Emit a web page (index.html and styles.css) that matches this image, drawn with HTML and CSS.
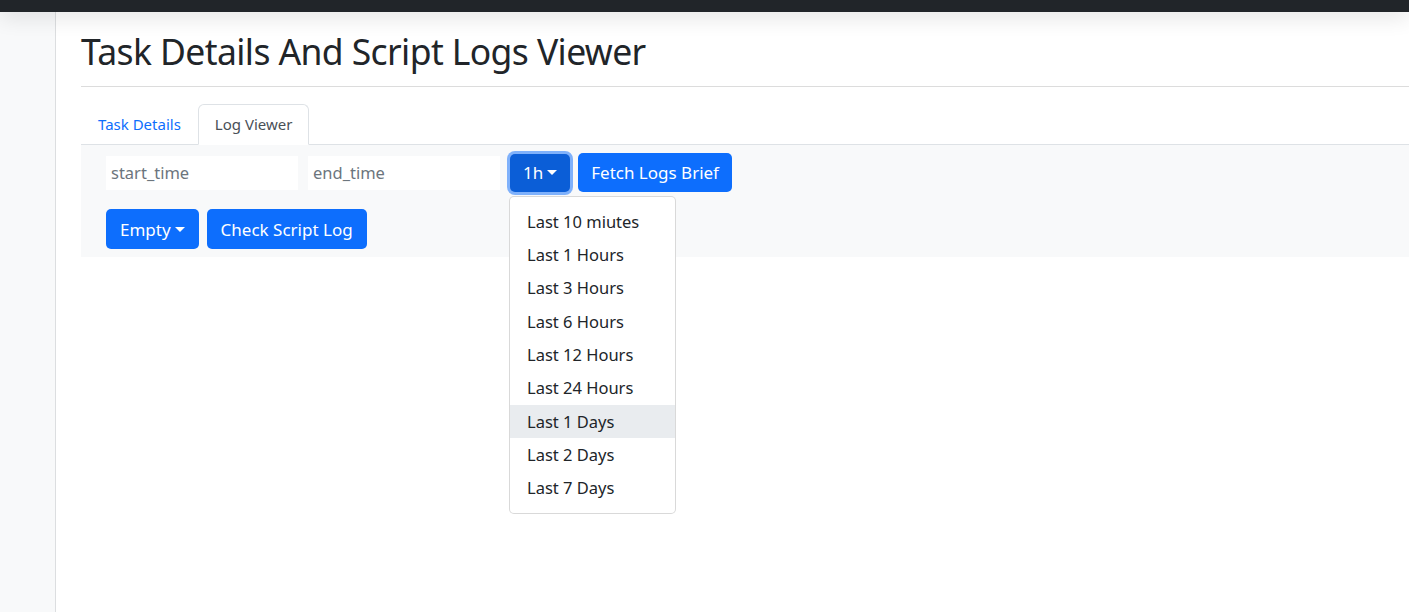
FILE: index.html
```html
<!DOCTYPE html>
<html lang="en">
<head>
<meta charset="utf-8">
<title>Task Details And Script Logs Viewer</title>
<link rel="stylesheet" href="styles.css">
</head>
<body>
<header class="topbar"></header>
<div class="layout">
  <aside class="sidebar"></aside>
  <main class="main">
    <h1 class="title">Task Details And Script Logs Viewer</h1>
    <hr class="rule">
    <ul class="tabs">
      <li><a class="tab">Task Details</a></li>
      <li><a class="tab active">Log Viewer</a></li>
    </ul>
    <section class="panel">
      <div class="row">
        <input class="field" placeholder="start_time">
        <input class="field" placeholder="end_time">
        <div class="dropdown">
          <button class="btn btn-focus">1h<span class="caret"></span></button>
          <ul class="menu">
            <li class="item">Last 10 miutes</li>
            <li class="item">Last 1 Hours</li>
            <li class="item">Last 3 Hours</li>
            <li class="item">Last 6 Hours</li>
            <li class="item">Last 12 Hours</li>
            <li class="item">Last 24 Hours</li>
            <li class="item hover">Last 1 Days</li>
            <li class="item">Last 2 Days</li>
            <li class="item">Last 7 Days</li>
          </ul>
        </div>
        <button class="btn">Fetch Logs Brief</button>
      </div>
      <div class="row row2">
        <button class="btn">Empty<span class="caret"></span></button>
        <button class="btn">Check Script Log</button>
      </div>
    </section>
  </main>
</div>
</body>
</html>
```

FILE: styles.css
```css
* { box-sizing: border-box; }
html, body { margin: 0; padding: 0; height: 100%; }
body {
  font-family: "Noto Sans", "Open Sans", sans-serif;
  color: #212529;
  background: #fff;
  overflow: hidden;
}
.topbar {
  height: 12px;
  background: #212529;
  position: relative;
  z-index: 5;
  box-shadow: 0 3px 22px rgba(0, 0, 0, 0.16);
}
.layout {
  display: flex;
  height: calc(100% - 12px);
}
.sidebar {
  width: 56px;
  flex: none;
  background: #f8f9fa;
  border-right: 1px solid #dcdee0;
}
.main {
  flex: 1;
  padding-left: 25px;
}
.title {
  margin: 0;
  padding-top: 16px;
  font-size: 35.5px;
  font-weight: 400;
  line-height: 46px;
  letter-spacing: -0.6px;
}
.rule {
  margin: 12px 0 0;
  border: 0;
  border-top: 1px solid #dcdcdc;
}
.tabs {
  list-style: none;
  margin: 17px 0 0;
  padding: 0;
  display: flex;
  border-bottom: 1px solid #dee2e6;
}
.tab {
  display: block;
  height: 41px;
  margin-bottom: -1px;
  padding: 0 16px;
  line-height: 39px;
  font-size: 15px;
  color: #0d6efd;
  border: 1px solid transparent;
  border-radius: 6px 6px 0 0;
}
.tab.active {
  color: #495057;
  background: #fff;
  border-color: #dee2e6 #dee2e6 #fff;
}
.panel {
  background: #f8f9fa;
  padding: 8px 25px 7px;
  height: 112px;
}
.row {
  display: flex;
  align-items: center;
  gap: 8px;
}
.row2 { margin-top: 17px; gap: 8px; }
.field {
  width: 192px;
  height: 34px;
  margin-right: 2px;
  border: 0;
  background: #fff;
  padding: 0 5px;
  font: 400 16.5px "Noto Sans", sans-serif;
  color: #212529;
  outline: none;
}
.field::placeholder { color: #6c757d; }
.btn {
  height: 39px;
  padding: 0 13px;
  border: 0;
  border-radius: 5px;
  background: #0d6efd;
  color: #fff;
  font: 400 17px "Noto Sans", sans-serif;
  display: flex;
  align-items: center;
  cursor: pointer;
}
.row2 .btn { height: 40px; padding: 0 14px; }
.btn-focus {
  background: #0b5ed7;
  box-shadow: 0 0 0 3px rgba(106, 164, 250, 0.85);
  padding: 0 13px;
  height: 38px;
  margin: 0;
}
.caret {
  display: inline-block;
  margin-left: 4px;
  border-top: 5px solid #fff;
  border-left: 5px solid transparent;
  border-right: 5px solid transparent;
}
.dropdown { position: relative; }
.menu {
  position: absolute;
  top: 42px;
  left: -1px;
  width: 167px;
  margin: 0;
  padding: 8px 0;
  list-style: none;
  background: #fff;
  border: 1px solid rgba(0, 0, 0, 0.15);
  border-radius: 5px;
  z-index: 10;
}
.item {
  height: 33.35px;
  line-height: 33px;
  padding: 0 17px;
  font-size: 16.5px;
  color: #212529;
  white-space: nowrap;
}
.item.hover { background: #e9ecef; }
```
